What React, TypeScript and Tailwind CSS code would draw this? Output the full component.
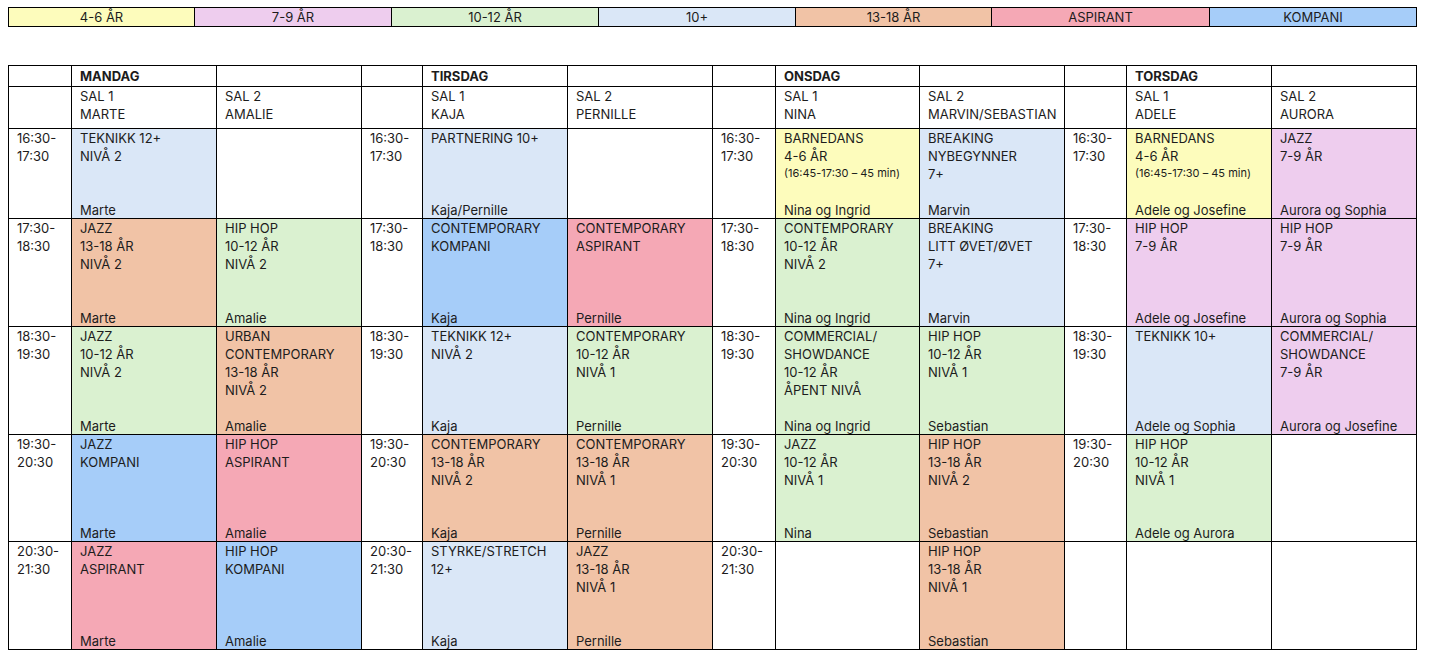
import { memo } from 'react';

type Tone = 'yellow' | 'pink' | 'green' | 'blue' | 'orange' | 'aspirant' | 'kompani' | 'none';

type Slot = {
  tone: Tone;
  lines?: string[];
  small?: string;
  name?: string;
};

const TONE_BG: Record<Tone, string> = {
  yellow: 'bg-[#fdfcbc]',
  pink: 'bg-[#eecdee]',
  green: 'bg-[#daf1d0]',
  blue: 'bg-[#dae7f7]',
  orange: 'bg-[#f1c3a6]',
  aspirant: 'bg-[#f5a8b5]',
  kompani: 'bg-[#a6cdf9]',
  none: 'bg-white',
};

const LEGEND: { label: string; tone: Tone }[] = [
  { label: '4-6 ÅR', tone: 'yellow' },
  { label: '7-9 ÅR', tone: 'pink' },
  { label: '10-12 ÅR', tone: 'green' },
  { label: '10+', tone: 'blue' },
  { label: '13-18 ÅR', tone: 'orange' },
  { label: 'ASPIRANT', tone: 'aspirant' },
  { label: 'KOMPANI', tone: 'kompani' },
];

const DAYS = [
  { day: 'MANDAG', sal1: 'MARTE', sal2: 'AMALIE' },
  { day: 'TIRSDAG', sal1: 'KAJA', sal2: 'PERNILLE' },
  { day: 'ONSDAG', sal1: 'NINA', sal2: 'MARVIN/SEBASTIAN' },
  { day: 'TORSDAG', sal1: 'ADELE', sal2: 'AURORA' },
];

const EMPTY: Slot = { tone: 'none' };
const BARNE = '(16:45-17:30 – 45 min)';

// hideTime: day indexes where the time column is left blank
const ROWS: { time: [string, string]; hideTime?: number[]; slots: Slot[] }[] = [
  {
    time: ['16:30-', '17:30'],
    slots: [
      { tone: 'blue', lines: ['TEKNIKK 12+', 'NIVÅ 2'], name: 'Marte' },
      EMPTY,
      { tone: 'blue', lines: ['PARTNERING 10+'], name: 'Kaja/Pernille' },
      EMPTY,
      { tone: 'yellow', lines: ['BARNEDANS', '4-6 ÅR'], small: BARNE, name: 'Nina og Ingrid' },
      { tone: 'blue', lines: ['BREAKING', 'NYBEGYNNER', '7+'], name: 'Marvin' },
      { tone: 'yellow', lines: ['BARNEDANS', '4-6 ÅR'], small: BARNE, name: 'Adele og Josefine' },
      { tone: 'pink', lines: ['JAZZ', '7-9 ÅR'], name: 'Aurora og Sophia' },
    ],
  },
  {
    time: ['17:30-', '18:30'],
    slots: [
      { tone: 'orange', lines: ['JAZZ', '13-18 ÅR', 'NIVÅ 2'], name: 'Marte' },
      { tone: 'green', lines: ['HIP HOP', '10-12 ÅR', 'NIVÅ 2'], name: 'Amalie' },
      { tone: 'kompani', lines: ['CONTEMPORARY', 'KOMPANI'], name: 'Kaja' },
      { tone: 'aspirant', lines: ['CONTEMPORARY', 'ASPIRANT'], name: 'Pernille' },
      { tone: 'green', lines: ['CONTEMPORARY', '10-12 ÅR', 'NIVÅ 2'], name: 'Nina og Ingrid' },
      { tone: 'blue', lines: ['BREAKING', 'LITT ØVET/ØVET', '7+'], name: 'Marvin' },
      { tone: 'pink', lines: ['HIP HOP', '7-9 ÅR'], name: 'Adele og Josefine' },
      { tone: 'pink', lines: ['HIP HOP', '7-9 ÅR'], name: 'Aurora og Sophia' },
    ],
  },
  {
    time: ['18:30-', '19:30'],
    slots: [
      { tone: 'green', lines: ['JAZZ', '10-12 ÅR', 'NIVÅ 2'], name: 'Marte' },
      { tone: 'orange', lines: ['URBAN', 'CONTEMPORARY', '13-18 ÅR', 'NIVÅ 2'], name: 'Amalie' },
      { tone: 'blue', lines: ['TEKNIKK 12+', 'NIVÅ 2'], name: 'Kaja' },
      { tone: 'green', lines: ['CONTEMPORARY', '10-12 ÅR', 'NIVÅ 1'], name: 'Pernille' },
      {
        tone: 'green',
        lines: ['COMMERCIAL/', 'SHOWDANCE', '10-12 ÅR', 'ÅPENT NIVÅ'],
        name: 'Nina og Ingrid',
      },
      { tone: 'green', lines: ['HIP HOP', '10-12 ÅR', 'NIVÅ 1'], name: 'Sebastian' },
      { tone: 'blue', lines: ['TEKNIKK 10+'], name: 'Adele og Sophia' },
      { tone: 'pink', lines: ['COMMERCIAL/', 'SHOWDANCE', '7-9 ÅR'], name: 'Aurora og Josefine' },
    ],
  },
  {
    time: ['19:30-', '20:30'],
    slots: [
      { tone: 'kompani', lines: ['JAZZ', 'KOMPANI'], name: 'Marte' },
      { tone: 'aspirant', lines: ['HIP HOP', 'ASPIRANT'], name: 'Amalie' },
      { tone: 'orange', lines: ['CONTEMPORARY', '13-18 ÅR', 'NIVÅ 2'], name: 'Kaja' },
      { tone: 'orange', lines: ['CONTEMPORARY', '13-18 ÅR', 'NIVÅ 1'], name: 'Pernille' },
      { tone: 'green', lines: ['JAZZ', '10-12 ÅR', 'NIVÅ 1'], name: 'Nina' },
      { tone: 'orange', lines: ['HIP HOP', '13-18 ÅR', 'NIVÅ 2'], name: 'Sebastian' },
      { tone: 'green', lines: ['HIP HOP', '10-12 ÅR', 'NIVÅ 1'], name: 'Adele og Aurora' },
      EMPTY,
    ],
  },
  {
    time: ['20:30-', '21:30'],
    hideTime: [3],
    slots: [
      { tone: 'aspirant', lines: ['JAZZ', 'ASPIRANT'], name: 'Marte' },
      { tone: 'kompani', lines: ['HIP HOP', 'KOMPANI'], name: 'Amalie' },
      { tone: 'blue', lines: ['STYRKE/STRETCH', '12+'], name: 'Kaja' },
      { tone: 'orange', lines: ['JAZZ', '13-18 ÅR', 'NIVÅ 1'], name: 'Pernille' },
      EMPTY,
      { tone: 'orange', lines: ['HIP HOP', '13-18 ÅR', 'NIVÅ 1'], name: 'Sebastian' },
      EMPTY,
      EMPTY,
    ],
  },
];

const SlotCell = ({ slot }: { slot: Slot }) => (
  <div className={`flex flex-col justify-between pl-2 pr-1 ${TONE_BG[slot.tone]}`}>
    <div>
      {slot.lines?.map((l, i) => (
        <div key={i}>{l}</div>
      ))}
      {slot.small && <div className="text-[11px] leading-[17px]">{slot.small}</div>}
    </div>
    {slot.name && <div className="translate-y-px">{slot.name}</div>}
  </div>
);

const TimeCell = ({ time, hidden }: { time: [string, string]; hidden?: boolean }) => (
  <div className="bg-white pl-2">
    {!hidden && (
      <>
        <div>{time[0]}</div>
        <div>{time[1]}</div>
      </>
    )}
  </div>
);

export const App = memo(() => {
  return (
    <div
      className="min-h-screen bg-white px-2 pt-[7px] text-[13px] leading-[18px] text-[#1c1c1c]"
      style={{ fontFamily: 'Inter, "Noto Sans", Arial, sans-serif' }}
    >
      <div className="grid w-[1409px] grid-cols-[185px_196px_206px_196px_195px_217px_206px] gap-px bg-black p-px">
        {LEGEND.map(item => (
          <div key={item.label} className={`h-[18px] text-center leading-[18px] ${TONE_BG[item.tone]}`}>
            {item.label}
          </div>
        ))}
      </div>

      <div className="mt-[38px] grid w-[1409px] grid-cols-[62px_144px_144px_60px_144px_144px_62px_143px_144px_61px_144px_144px] grid-rows-[20px_41px_89px_107px_107px_106px_107px] gap-px bg-black p-px">
        {DAYS.map(d => (
          <div key={d.day} className="contents">
            <div className="bg-white" />
            <div className="bg-white pl-2 font-bold leading-[20px]">{d.day}</div>
            <div className="bg-white" />
          </div>
        ))}
        {DAYS.map(d => (
          <div key={`${d.day}-sal`} className="contents">
            <div className="bg-white" />
            <div className="bg-white pl-2">
              <div>SAL 1</div>
              <div>{d.sal1}</div>
            </div>
            <div className="bg-white pl-2">
              <div>SAL 2</div>
              <div>{d.sal2}</div>
            </div>
          </div>
        ))}
        {ROWS.map(row =>
          [0, 1, 2, 3].map(di => (
            <div key={`${row.time[0]}-${di}`} className="contents">
              <TimeCell time={row.time} hidden={row.hideTime?.includes(di)} />
              <SlotCell slot={row.slots[di * 2]} />
              <SlotCell slot={row.slots[di * 2 + 1]} />
            </div>
          )),
        )}
      </div>
    </div>
  );
});

App.displayName = `App`;

export default App;
